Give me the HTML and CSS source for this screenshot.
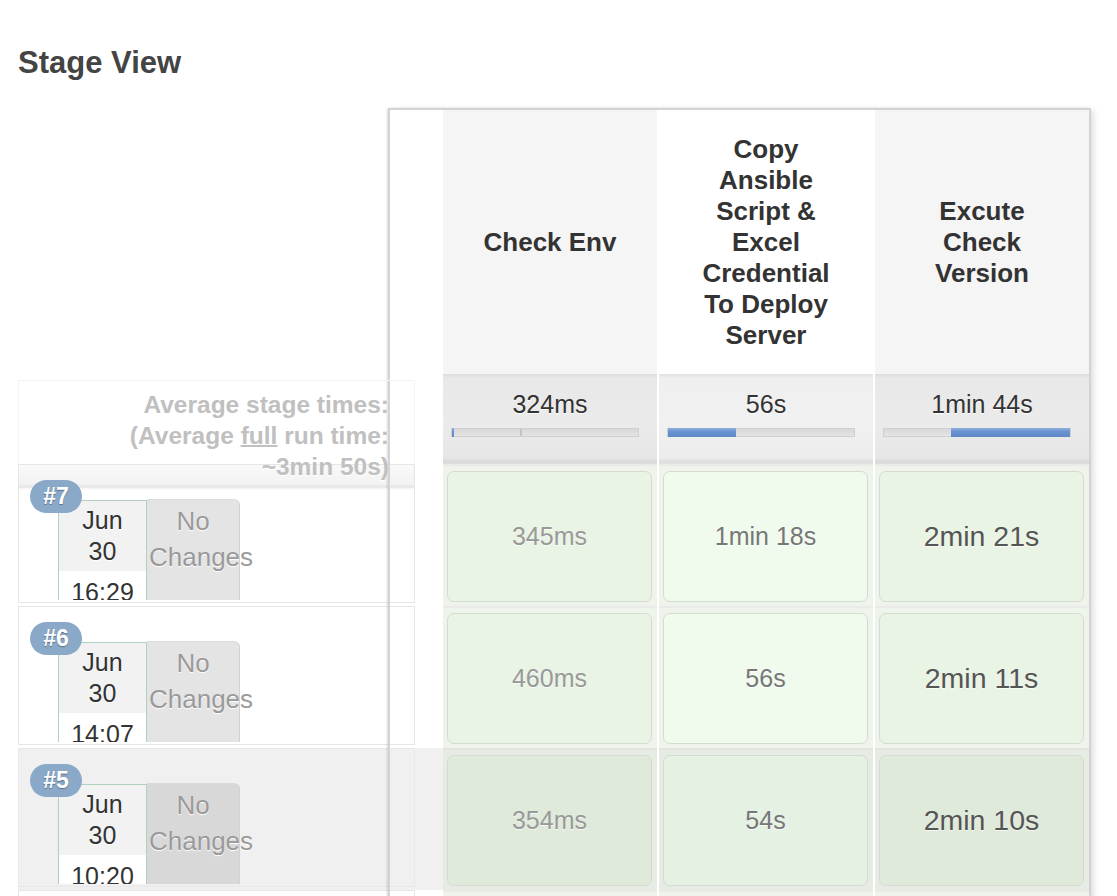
FILE: index.html
```html
<!DOCTYPE html>
<html>
<head>
<meta charset="utf-8">
<title>Stage View</title>
<link rel="stylesheet" href="styles.css">
</head>
<body>
<h2 class="title">Stage View</h2>
<div class="stage-view">
  <div class="builds">
    <div class="avg-label">Average stage times:<br>(Average <u>full</u> run time:<br>~3min 50s)</div>

    <div class="build-row first">
      <div class="build-box">
        <span class="badge">#7</span>
        <div class="date"><div class="date-top">Jun<br>30</div><div class="date-time">16:29</div></div>
        <div class="changes">No<br>Changes</div>
      </div>
    </div>

    <div class="build-row">
      <div class="build-box">
        <span class="badge">#6</span>
        <div class="date"><div class="date-top">Jun<br>30</div><div class="date-time">14:07</div></div>
        <div class="changes">No<br>Changes</div>
      </div>
    </div>

    <div class="build-row hover">
      <div class="build-box">
        <span class="badge">#5</span>
        <div class="date"><div class="date-top">Jun<br>30</div><div class="date-time">10:20</div></div>
        <div class="changes">No<br>Changes</div>
      </div>
    </div>

    <div class="build-row">
      <div class="build-box">
        <span class="badge">#4</span>
        <div class="date"><div class="date-top">Jun<br>30</div><div class="date-time">09:41</div></div>
        <div class="changes">No<br>Changes</div>
      </div>
    </div>
  </div>

  <div class="stage-table">
    <div class="blank head-blank"></div>
    <div class="th">Check Env</div>
    <div class="th hl">Copy Ansible Script &amp; Excel Credential To Deploy Server</div>
    <div class="th">Excute Check Version</div>

    <div class="blank"></div>
    <div class="avg">324ms<div class="bar"><span class="tick" style="left:68px"></span><span class="fill" style="left:0;width:2px"></span></div></div>
    <div class="avg hl">56s<div class="bar"><span class="fill" style="left:0;width:68px"></span></div></div>
    <div class="avg">1min 44s<div class="bar"><span class="fill" style="left:67px;width:119px"></span></div></div>

    <div class="blank"></div>
    <div class="cell"><div class="box c1">345ms</div></div>
    <div class="cell"><div class="box c2">1min 18s</div></div>
    <div class="cell"><div class="box c3">2min 21s</div></div>

    <div class="blank"></div>
    <div class="cell"><div class="box c1">460ms</div></div>
    <div class="cell"><div class="box c2">56s</div></div>
    <div class="cell"><div class="box c3">2min 11s</div></div>

    <div class="blank"></div>
    <div class="cell hover"><div class="box c1">354ms</div></div>
    <div class="cell hover"><div class="box c2">54s</div></div>
    <div class="cell hover"><div class="box c3">2min 10s</div></div>

    <div class="blank"></div>
    <div class="cell"><div class="box c1">338ms</div></div>
    <div class="cell"><div class="box c2">55s</div></div>
    <div class="cell"><div class="box c3">2min 5s</div></div>
  </div>
</div>
</body>
</html>
```

FILE: styles.css
```css
html, body {
  margin: 0;
  padding: 0;
  background: #fff;
  font-family: "Liberation Sans", Arial, Helvetica, sans-serif;
  color: #333;
}

.title {
  margin: 45px 0 27px 18px;
  font-size: 31px;
  line-height: 36px;
  font-weight: bold;
  color: #444;
}

.stage-view {
  display: flex;
  align-items: flex-start;
  margin-left: 18px;
}

/* ---------- left build column ---------- */
.builds {
  flex: none;
  width: 425px;
  padding-top: 272px;
}

.avg-label {
  box-sizing: border-box;
  width: 397px;
  height: 84px;
  padding: 8px 25px 0 0;
  border: 1px solid #f4f4f4;
  border-bottom: none;
  text-align: right;
  font-size: 24.5px;
  line-height: 31px;
  font-weight: bold;
  color: #c0c0c0;
  text-shadow: 0 1px 0 #fff;
  white-space: nowrap;
  position: relative;
  z-index: 1;
}

.avg-label u {
  text-decoration-thickness: 2px;
}

.build-row {
  height: 142px;
}

.build-row.hover {
  background: #f0f0f0;
}

.build-box {
  position: relative;
  box-sizing: border-box;
  width: 397px;
  height: 139px;
  padding: 35px 0 0 39px;
  border: 1px solid #e6e6e6;
  background: #fff;
  overflow: hidden;
  display: flex;
  align-items: flex-start;
}

.build-row.first .build-box {
  background: linear-gradient(to bottom, #f9f9f9 0, #f3f3f3 19px, #e4e4e4 22px, #fbfbfb 24px, #fff 26px);
}

.build-row.hover .build-box {
  background: #f0f0f0;
  border-color: #e8e8e8;
}

.badge {
  position: absolute;
  left: 11px;
  top: 15px;
  z-index: 2;
  width: 52px;
  height: 33px;
  line-height: 33px;
  border-radius: 17px;
  background: #8aa9c9;
  color: #fff;
  font-size: 23px;
  font-weight: bold;
  text-align: center;
  text-shadow: 0 1px 1px rgba(0, 0, 0, 0.35);
}

.date {
  flex: none;
  box-sizing: border-box;
  width: 89px;
  height: 100px;
  overflow: hidden;
  border: 1px solid #afd2bf;
  border-bottom: none;
  font-size: 25px;
  line-height: 31px;
  text-align: center;
  color: #333;
  text-shadow: 0 1px 0 #fff;
}

.date-top {
  background: #f2f2f2;
  padding: 4px 0 4px;
}

.date-time {
  background: #fff;
  padding-top: 6px;
  height: 60px;
}

.changes {
  flex: none;
  box-sizing: border-box;
  width: 93px;
  height: 101px;
  margin-top: -1px;
  padding: 3px 2px 0;
  background: #e4e4e4;
  border-top: 1px solid #dadada;
  border-right: 1px solid #d2d2d2;
  border-top-right-radius: 6px;
  color: #9a9a9a;
  font-size: 26px;
  line-height: 36px;
  text-align: center;
  white-space: nowrap;
  text-shadow: 0 1px 1px #fff;
}

.build-row.hover .changes {
  background: #d8d8d8;
}

/* ---------- stage table ---------- */
.stage-table {
  flex: none;
  position: relative;
  margin-left: -55px;
  display: grid;
  grid-template-columns: 51px repeat(3, 214px);
  grid-template-rows: 264px 90px repeat(4, 142px);
  column-gap: 2px;
  border: 2px solid #d3d3d3;
  border-bottom: none;
  box-shadow: 3px 2px 6px rgba(0, 0, 0, 0.12), -1px 0 2px rgba(0, 0, 0, 0.12);
}

.head-blank {
  background: #fff;
}

.th {
  display: flex;
  align-items: center;
  justify-content: center;
  text-align: center;
  padding: 0 32px;
  background: #f5f5f5;
  font-size: 26px;
  line-height: 31px;
  font-weight: bold;
  color: #333;
}

.th.hl {
  background: #fff;
}

.avg {
  box-sizing: border-box;
  padding-top: 15px;
  background: linear-gradient(to bottom, #dcdcdc 0, #e8e8e8 4px, #ebebeb 50px, #e6e6e6 84px, #d8d8d8 88px, #e0e0e0 90px);
  text-align: center;
  font-size: 25px;
  line-height: 31px;
  color: #333;
  text-shadow: 0 1px 0 #fff;
}

.avg.hl {
  background: linear-gradient(to bottom, #e0e0e0 0, #efefef 4px, #f1f1f1 50px, #ececec 84px, #dcdcdc 88px, #e4e4e4 90px);
}

.bar {
  position: relative;
  box-sizing: border-box;
  height: 9px;
  margin: 8px 18px 0 8px;
  background: linear-gradient(to bottom, #d8d8d8, #e4e4e4);
  border: 1px solid #d0d0d0;
}

.fill {
  position: absolute;
  top: -1px;
  height: 9px;
  background: linear-gradient(to bottom, #8fb0e0, #6a92d0 40%, #5f88c8);
}

.tick {
  position: absolute;
  top: 0;
  width: 2px;
  height: 7px;
  background: #c4c4c4;
}

.cell {
  box-sizing: border-box;
  padding: 5px 5px 4px 4px;
  border-top: 2px solid #e9ebe8;
  background: #eef4ec;
}

.cell.hover {
  background: #e6ebe4;
  border-top-color: #e2e4e1;
}

.box {
  box-sizing: border-box;
  height: 131px;
  border: 1px solid #d4dcd1;
  border-radius: 7px;
  background: #e9f4e5;
  display: flex;
  align-items: center;
  justify-content: center;
  font-size: 25px;
  color: #999;
  text-shadow: 0 1px 0 rgba(255, 255, 255, 0.7);
}

.box.c2 {
  background: #f0fbed;
  color: #777;
}

.box.c3 {
  font-size: 28.5px;
  color: #555;
}

.cell.hover .box {
  background: #dfeadb;
}

.cell.hover .box.c2 {
  background: #e5f1e2;
}
```
